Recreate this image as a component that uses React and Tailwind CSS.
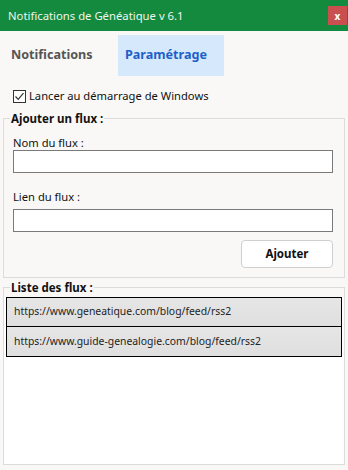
export default function App() {
  const font = { fontFamily: '"Noto Sans", "Open Sans", sans-serif' };
  return (
    <div className="w-[348px] h-[470px] bg-[#f9f8f7] flex flex-col overflow-hidden" style={font}>
      <div className="h-[31px] bg-[#138a3e] flex items-center justify-between pl-[8px] pr-[1px] shrink-0">
        <span className="text-[11.3px] text-[#eef5ee] leading-none">Notifications de Généatique v 6.1</span>
        <div className="w-[19px] h-[19px] bg-[#c9504f] flex items-center justify-center text-white text-[10px] font-bold leading-none">x</div>
      </div>
      <div className="flex h-[41px] mt-[4px] shrink-0">
        <div className="w-[118px] flex items-center pl-[11px] text-[12.6px] font-bold text-[#555555]">Notifications</div>
        <div className="w-[106px] bg-[#d5e8fc] flex items-center pl-[7px] text-[12.6px] font-bold text-[#1f5fc8]">Paramétrage</div>
      </div>
      <div className="flex items-center mt-[13px] ml-[13px] h-[14px]">
        <div className="w-[13px] h-[13px] border border-[#333] bg-white flex items-center justify-center">
          <svg width="11" height="11" viewBox="0 0 11 11"><path d="M1.5 5.5 L4.2 8.3 L9.5 2.2" fill="none" stroke="#333" strokeWidth="1.2" /></svg>
        </div>
        <span className="ml-[3px] text-[11.2px] text-[#111] leading-none">Lancer au démarrage de Windows</span>
      </div>
      <div className="relative mx-[3px] mt-[15px] h-[160px] border border-[#dcdcdc] shrink-0">
        <span className="absolute left-[6px] top-[-8px] bg-[#f9f8f7] px-[1px] text-[11.5px] font-bold text-[#111] leading-[16px]">Ajouter un flux :</span>
        <div className="px-[9px] pt-[17px] flex flex-col">
          <span className="text-[11.2px] text-[#111] leading-[14px]">Nom du flux :</span>
          <div className="h-[23px] w-[320px] bg-white border border-[#7a7a7a]"></div>
          <span className="mt-[17px] text-[11.2px] text-[#111] leading-[14px]">Lien du flux :</span>
          <div className="mt-[5px] h-[23px] w-[320px] bg-white border border-[#7a7a7a]"></div>
          <div className="flex justify-end w-[320px] mt-[8px]">
            <div className="w-[92px] h-[28px] bg-white border border-[#cfcfcf] rounded-[4px] flex items-center justify-center text-[11.5px] font-bold text-[#111]">Ajouter</div>
          </div>
        </div>
      </div>
      <div className="relative mx-[3px] mt-[9px] h-[178px] border border-[#dcdcdc] bg-white shrink-0">
        <div className="absolute left-[0px] right-[0px] top-[-1px] h-[10px] bg-[#f9f8f7] border-t border-[#dcdcdc]"></div>
        <span className="absolute left-[6px] top-[-8px] bg-[#f9f8f7] px-[1px] text-[11.5px] font-bold text-[#111] leading-[16px]">Liste des flux :</span>
        <div className="absolute left-[2px] right-[2px] top-[9px] flex flex-col border border-black">
          <div className="h-[29px] bg-gradient-to-b from-[#e6e6e6] to-[#dfdfdf] flex items-center pl-[7px] text-[10.4px] text-[#222] border-b border-black">https://www.geneatique.com/blog/feed/rss2</div>
          <div className="h-[29px] bg-gradient-to-b from-[#e6e6e6] to-[#dfdfdf] flex items-center pl-[7px] text-[10.4px] text-[#222]">https://www.guide-genealogie.com/blog/feed/rss2</div>
        </div>
      </div>
    </div>
  );
}
